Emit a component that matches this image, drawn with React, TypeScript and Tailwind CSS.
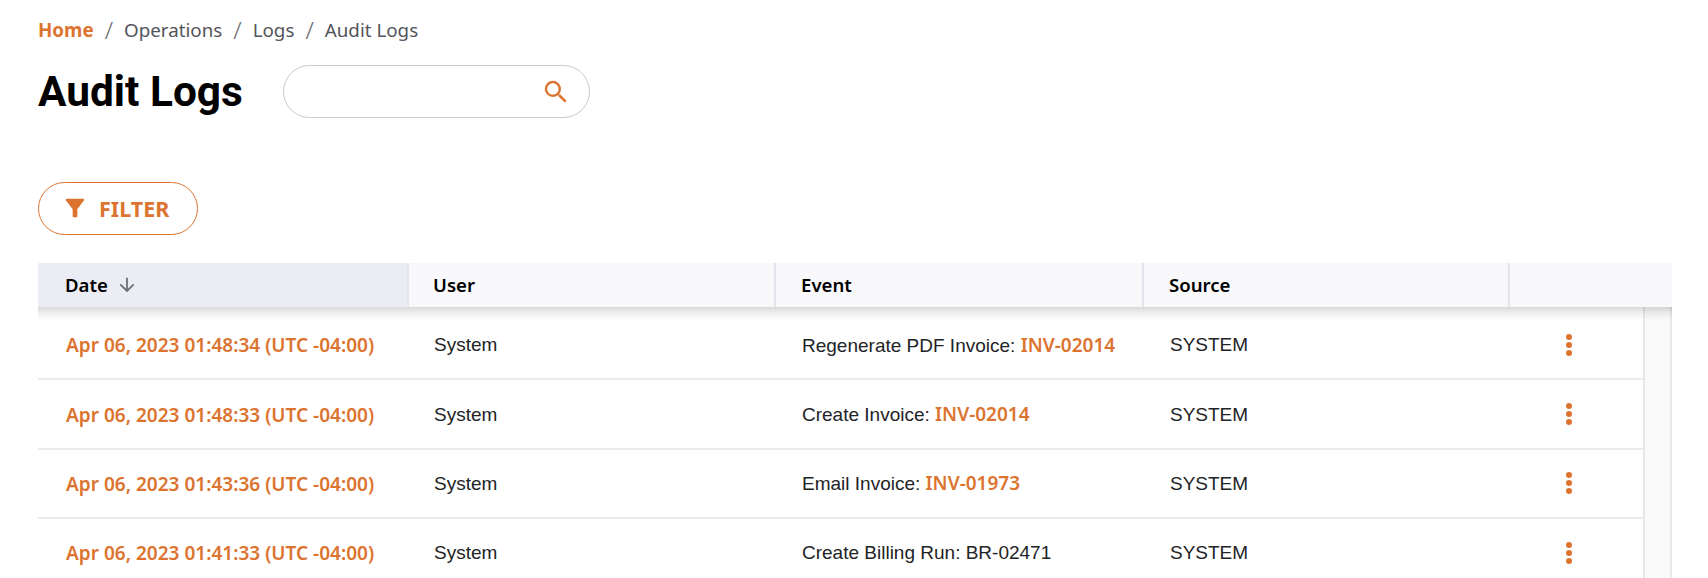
/**
 * Audit Logs page
 * Breadcrumb, title with search, filter button and the log table
 */
const logs = [
  { date: 'Apr 06, 2023 01:48:34 (UTC -04:00)', event: 'Regenerate PDF Invoice: ', link: 'INV-02014' },
  { date: 'Apr 06, 2023 01:48:33 (UTC -04:00)', event: 'Create Invoice: ', link: 'INV-02014' },
  { date: 'Apr 06, 2023 01:43:36 (UTC -04:00)', event: 'Email Invoice: ', link: 'INV-01973' },
  { date: 'Apr 06, 2023 01:41:33 (UTC -04:00)', event: 'Create Billing Run: BR-02471', link: '' },
]

const crumbs = ['Operations', 'Logs', 'Audit Logs']

function MoreIcon() {
  return (
    <svg width="24" height="24" viewBox="0 0 24 24" fill="#dc7430" aria-hidden="true">
      <circle cx="12" cy="4" r="3" />
      <circle cx="12" cy="12" r="3" />
      <circle cx="12" cy="20" r="3" />
    </svg>
  )
}

export default function App() {
  return (
    <div className="h-[578px] overflow-hidden bg-white pl-[38px] pr-[36px] pt-[18px] font-['Noto_Sans',sans-serif]">
      {/* Breadcrumb */}
      <nav className="flex h-[24px] items-center text-[18.8px] text-[#54555c]" aria-label="Breadcrumb">
        <span className="font-bold text-[#dc7430]">Home</span>
        {crumbs.map((c) => (
          <span key={c} className="flex items-center">
            <span className="mx-[11px] text-[24px] font-light text-[#6b6c72]">/</span>
            <span>{c}</span>
          </span>
        ))}
      </nav>

      {/* Title and search */}
      <div className="mt-[23px] flex items-center">
        <h1 className="w-[245px] font-['Roboto',sans-serif] text-[42.4px] leading-[53px] font-bold text-black">Audit Logs</h1>
        <div className="flex h-[53px] w-[307px] items-center justify-end rounded-full border border-[#c9cad3] pr-[18px]">
          <svg width="30" height="30" viewBox="0 0 24 24" fill="#dc7430" aria-hidden="true">
            <path d="M15.5 14h-.79l-.28-.27A6.471 6.471 0 0 0 16 9.5 6.5 6.5 0 1 0 9.5 16c1.61 0 3.09-.59 4.23-1.57l.27.28v.79l5 4.99L20.49 19l-4.99-5zm-6 0C7.01 14 5 11.99 5 9.5S7.01 5 9.5 5 14 7.01 14 9.5 11.99 14 9.5 14z" />
          </svg>
        </div>
      </div>

      {/* Filter */}
      <button className="mt-[64px] flex h-[53px] w-[160px] items-center gap-[10px] rounded-full border border-[#dc7430] pl-[22px] text-[21.5px] font-bold text-[#dc7430]">
        <svg className="-mt-[2px]" width="28" height="28" viewBox="0 0 24 24" fill="#dc7430" aria-hidden="true">
          <path d="M4.25 5.61C6.27 8.2 10 13 10 13v6c0 .55.45 1 1 1h2c.55 0 1-.45 1-1v-6s3.72-4.8 5.74-7.39c.51-.66.04-1.61-.79-1.61H5.04c-.83 0-1.3.95-.79 1.61z" />
        </svg>
        <span className="pt-[2px]">FILTER</span>
      </button>

      {/* Table header */}
      <div className="relative z-10 mt-[28px] grid h-[44px] grid-cols-[371px_367px_368px_366px_1fr] bg-[#f9f9fb] text-[18.6px] font-semibold text-black">
        <div className="flex items-center gap-[8px] border-r-2 border-[#e4e4ec] bg-[#ebecf4] pl-[27px]">
          Date
          <svg width="22" height="22" viewBox="0 0 24 24" fill="#6f7076" aria-hidden="true">
            <path d="M20 12l-1.41-1.41L13 16.17V4h-2v12.17l-5.58-5.59L4 12l8 8 8-8z" />
          </svg>
        </div>
        <div className="flex items-center border-r-2 border-[#e4e4ec] pl-[24px]">User</div>
        <div className="flex items-center border-r-2 border-[#e4e4ec] pl-[25px]">Event</div>
        <div className="flex items-center border-r-2 border-[#e4e4ec] pl-[25px]">Source</div>
        <div />
        <div className="absolute inset-x-0 top-full h-[14px] bg-gradient-to-b from-black/15 via-black/5 to-transparent" />
      </div>

      {/* Table body with scrollbar track */}
      <div className="flex">
        <div className="min-w-0 flex-1 pt-[4px]">
          {logs.map((log) => (
            <div
              key={log.date}
              className="grid h-[69.3px] grid-cols-[371px_367px_368px_366px_1fr] items-center border-b-2 border-[#ebebeb] pt-[2px] font-['Liberation_Sans',sans-serif] text-[19px] text-[#222326]"
            >
              <div className="pl-[28px] font-['Noto_Sans',sans-serif] text-[19.05px] font-semibold text-[#dc7430]">{log.date}</div>
              <div className="pl-[25px]">System</div>
              <div className="pl-[26px]">
                {log.event}
                {log.link && <span className="font-['Noto_Sans',sans-serif] font-semibold text-[#dc7430]">{log.link}</span>}
              </div>
              <div className="pl-[26px]">SYSTEM</div>
              <div className="-mt-[2px] pl-[47px]">
                <MoreIcon />
              </div>
            </div>
          ))}
        </div>
        <div className="h-[300px] w-[29px] border-x-2 border-[#e8e8e8] bg-[#fafafa]" />
      </div>
    </div>
  )
}
